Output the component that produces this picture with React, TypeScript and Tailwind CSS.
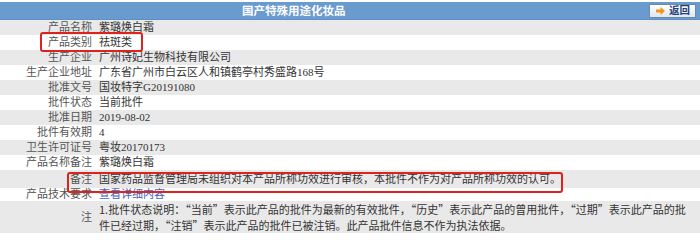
import React from "react";

type Row = {
  label: string;
  value: React.ReactNode;
  h: string;
};

const rows: Row[] = [
  { label: "产品名称", value: "紫璐焕白霜", h: "h-[15px]" },
  { label: "产品类别", value: "祛斑类", h: "h-[15px]" },
  { label: "生产企业", value: "广州诗妃生物科技有限公司", h: "h-[15px]" },
  { label: "生产企业地址", value: "广东省广州市白云区人和镇鹤亭村秀盛路168号", h: "h-[15px]" },
  { label: "批准文号", value: "国妆特字G20191080", h: "h-[15px]" },
  { label: "批件状态", value: "当前批件", h: "h-[15px]" },
  { label: "批准日期", value: "2019-08-02", h: "h-[15px]" },
  { label: "批件有效期", value: "4", h: "h-[15px]" },
  { label: "卫生许可证号", value: "粤妆20170173", h: "h-[15px]" },
  { label: "产品名称备注", value: "紫璐焕白霜", h: "h-[15px]" },
  {
    label: "备注",
    value: "国家药品监督管理局未组织对本产品所称功效进行审核，本批件不作为对产品所称功效的认可。",
    h: "h-[18px]",
  },
  {
    label: "产品技术要求",
    value: <span className="text-[#3d63c0]">查看详细内容</span>,
    h: "h-[13px]",
  },
];

const ArrowIcon = () => (
  <svg width="9" height="8" viewBox="0 0 9 8" className="shrink-0">
    <path d="M0 2.5h4.5V0L9 4 4.5 8V5.5H0z" fill="#f2951b" />
  </svg>
);

export default function App() {
  return (
    <div className="relative w-[700px] h-[240px] bg-white overflow-hidden font-['Liberation_Serif','Noto_Sans_CJK_SC',serif] text-[11px] leading-[13px]">
      <div className="pt-[2px]">
        {/* header bar */}
        <div className="h-[18px] bg-[#6a9bcf] flex items-center border-b border-[#5f8fc4]">
          <span className="pl-[242px] text-white font-bold text-[11.5px] font-['Noto_Sans_CJK_SC',sans-serif]">
            国产特殊用途化妆品
          </span>
          <button className="ml-auto mr-[4px] h-[14px] w-[47px] flex items-center gap-[4px] pl-[6px] border border-[#6f8aa8] bg-gradient-to-b from-white to-[#dfe6ee]">
            <ArrowIcon />
            <span className="text-[10.5px] font-bold text-[#1f3f7a] font-['Noto_Sans_CJK_SC',sans-serif] leading-none">
              返回
            </span>
          </button>
        </div>

        {rows.map((r, i) => (
          <div
            key={r.label}
            className={`grid grid-cols-[95px_1fr] items-center ${r.h} ${i % 2 === 0 ? "bg-[#e9e9e9]" : "bg-white"}`}
          >
            <span className="text-right pr-[3px] text-[#555]">{r.label}</span>
            <span className="pl-[4px] text-[#333] whitespace-nowrap">{r.value}</span>
          </div>
        ))}

        <div className="grid grid-cols-[95px_1fr] items-center h-[32px] bg-[#e9e9e9]">
          <span className="text-right pr-[3px] text-[#555]">注</span>
          <p className="pl-[4px] text-[#333] leading-[16px] whitespace-nowrap font-['Noto_Sans_CJK_SC',serif]">
            1.批件状态说明：“当前”表示此产品的批件为最新的有效批件，“历史”表示此产品的曾用批件，“过期”表示此产品的批
            <br />
            件已经过期，“注销”表示此产品的批件已被注销。此产品批件信息不作为执法依据。
          </p>
        </div>
      </div>

      {/* red annotation boxes */}
      <div className="absolute left-[40px] top-[32px] w-[103px] h-[20px] border-2 border-[#e0221c] rounded-[3px]" />
      <div className="absolute left-[67px] top-[172px] w-[496px] h-[21px] border-2 border-[#e0221c] rounded-[3px]" />
    </div>
  );
}
